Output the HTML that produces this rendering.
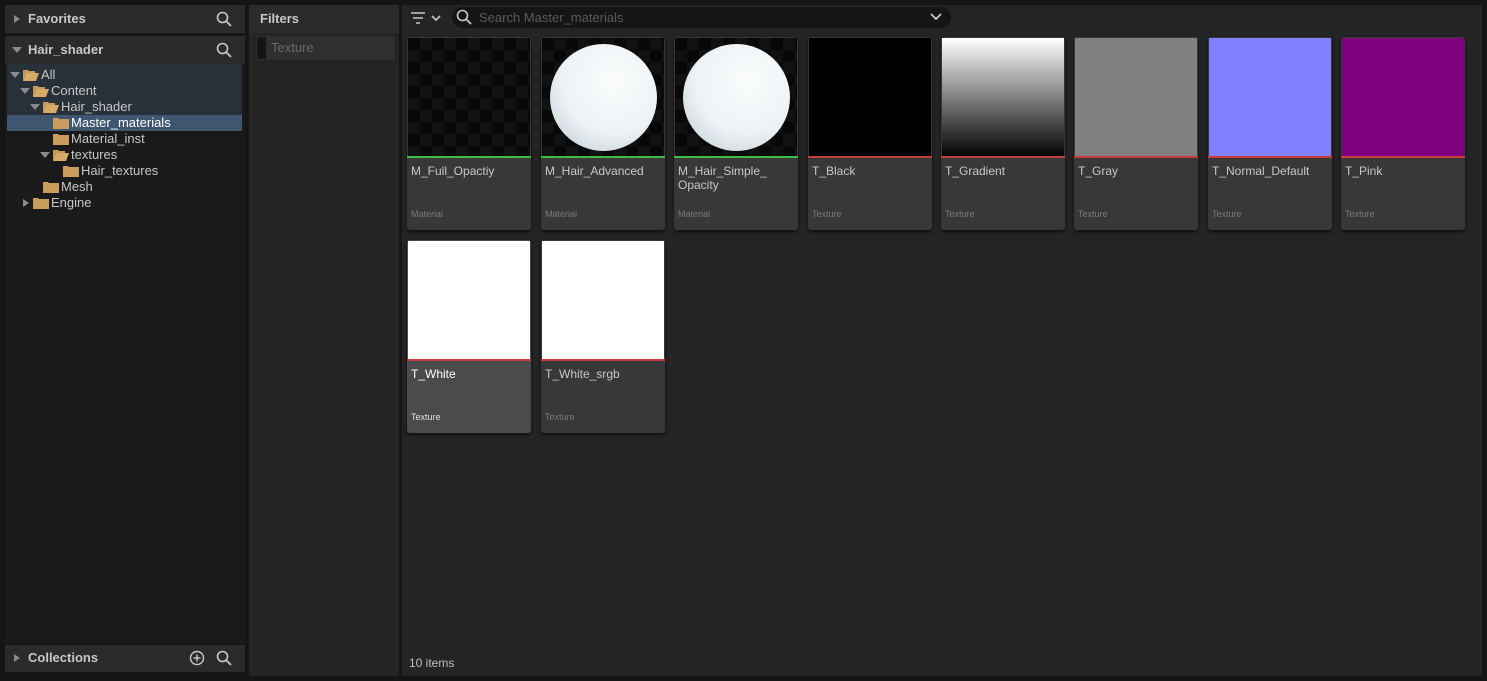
<!DOCTYPE html>
<html><head><meta charset="utf-8"><style>
*{margin:0;padding:0;box-sizing:border-box}
body{width:1487px;height:681px;background:#151515;font-family:"Liberation Sans",sans-serif;position:relative;overflow:hidden;color:#c0c0c0}
.a{position:absolute}
.hdr{background:#2b2b2b;color:#c8c8c8;font-weight:bold;font-size:13px}
.tri{position:absolute;width:0;height:0}
.tr{border-top:4px solid transparent;border-bottom:4px solid transparent;border-left:6px solid #8a8a8a}
.td{border-left:5px solid transparent;border-right:5px solid transparent;border-top:6px solid #8a8a8a}
.row{position:absolute;font-size:13px;color:#c8c8c8;height:16px;line-height:16px}
.card{position:absolute;width:124px;height:193px;background:#383838;border-radius:3px;box-shadow:0 2px 3px rgba(0,0,0,.6)}
.th{position:absolute;left:1px;top:1px;width:122px;height:119px;background:#000}
.ln{position:absolute;left:0;top:119px;width:124px;height:2px}
.nm{position:absolute;left:4px;top:127px;font-size:12px;color:#c8c8c8;line-height:14px}
.ty{position:absolute;left:4px;top:172px;font-size:9px;color:#7a7a7a}
.chk{background-color:#080808;background-image:linear-gradient(45deg,#111 25%,transparent 25%,transparent 75%,#111 75%),linear-gradient(45deg,#111 25%,transparent 25%,transparent 75%,#111 75%);background-size:24px 24px;background-position:0 0,12px 12px}
</style></head><body>
<svg width="0" height="0" style="position:absolute"><defs>
<symbol id="fo" viewBox="0 0 16 12"><path d="M0 1h5l1 1h6v2H3L0 12z" fill="#c49a5c"/><path d="M3 4h13l-3 8H0z" fill="#d6ab68"/></symbol>
<symbol id="fc" viewBox="0 0 16 12"><path d="M0 1h5l1 1h10v10H0z" fill="#c99d5d"/></symbol>
<symbol id="mg" viewBox="0 0 16 16"><circle cx="6.5" cy="6.5" r="5" fill="none" stroke="#c8c8c8" stroke-width="1.6"/><path d="M10 10l5 5" stroke="#c8c8c8" stroke-width="1.8"/></symbol>
</defs></svg>

<div class="a hdr" style="left:5px;top:5px;width:240px;height:28px"></div>
<div class="tri tr" style="left:14px;top:15px"></div>
<div class="a" style="left:28px;top:11px;font-size:13px;font-weight:bold;color:#c8c8c8">Favorites</div>
<svg class="a" style="left:216px;top:11px" width="16" height="16"><use href="#mg"/></svg>
<div class="a hdr" style="left:5px;top:36px;width:240px;height:28px"></div>
<div class="tri td" style="left:12px;top:47px"></div>
<div class="a" style="left:28px;top:42px;font-size:13px;font-weight:bold;color:#c8c8c8">Hair_shader</div>
<svg class="a" style="left:216px;top:42px" width="16" height="16"><use href="#mg"/></svg>
<div class="a" style="left:5px;top:64px;width:240px;height:580px;background:#1a1a1a"></div>
<div class="a" style="left:7px;top:64px;width:235px;height:67px;background:#28303a"></div>
<div class="a" style="left:7px;top:115px;width:235px;height:16px;background:#3e5670"></div>
<div class="tri td" style="left:10px;top:72px"></div><svg class="a" style="left:23px;top:69px" width="16" height="12"><use href="#fo"/></svg><div class="row" style="left:41px;top:67px">All</div>
<div class="tri td" style="left:20px;top:88px"></div><svg class="a" style="left:33px;top:85px" width="16" height="12"><use href="#fo"/></svg><div class="row" style="left:51px;top:83px">Content</div>
<div class="tri td" style="left:30px;top:104px"></div><svg class="a" style="left:43px;top:101px" width="16" height="12"><use href="#fo"/></svg><div class="row" style="left:61px;top:99px">Hair_shader</div>
<svg class="a" style="left:53px;top:117px" width="16" height="12"><use href="#fc"/></svg><div class="row" style="left:71px;top:115px;color:#fff">Master_materials</div>
<svg class="a" style="left:53px;top:133px" width="16" height="12"><use href="#fc"/></svg><div class="row" style="left:71px;top:131px">Material_inst</div>
<div class="tri td" style="left:40px;top:152px"></div><svg class="a" style="left:53px;top:149px" width="16" height="12"><use href="#fo"/></svg><div class="row" style="left:71px;top:147px">textures</div>
<svg class="a" style="left:63px;top:165px" width="16" height="12"><use href="#fc"/></svg><div class="row" style="left:81px;top:163px">Hair_textures</div>
<svg class="a" style="left:43px;top:181px" width="16" height="12"><use href="#fc"/></svg><div class="row" style="left:61px;top:179px">Mesh</div>
<div class="tri tr" style="left:23px;top:199px"></div><svg class="a" style="left:33px;top:197px" width="16" height="12"><use href="#fc"/></svg><div class="row" style="left:51px;top:195px">Engine</div>
<div class="a hdr" style="left:5px;top:645px;width:240px;height:27px"></div>
<div class="tri tr" style="left:14px;top:654px"></div>
<div class="a" style="left:28px;top:650px;font-size:13px;font-weight:bold;color:#c8c8c8">Collections</div>
<svg class="a" style="left:189px;top:650px" width="16" height="16"><circle cx="8" cy="8" r="6.5" fill="none" stroke="#c8c8c8" stroke-width="1.4"/><path d="M8 4.5v7M4.5 8h7" stroke="#c8c8c8" stroke-width="1.4"/></svg>
<svg class="a" style="left:216px;top:650px" width="16" height="16"><use href="#mg"/></svg>

<div class="a" style="left:249px;top:5px;width:150px;height:671px;background:#242424"></div>
<div class="a hdr" style="left:249px;top:5px;width:150px;height:28px"></div>
<div class="a" style="left:260px;top:11px;font-size:13px;font-weight:bold;color:#c8c8c8">Filters</div>
<div class="a" style="left:256px;top:36px;width:139px;height:24px;background:#2f2f2f;border-radius:3px"></div>
<div class="a" style="left:257px;top:37px;width:9px;height:22px;background:#151515;border-radius:3px 0 0 3px"></div>
<div class="a" style="left:271px;top:40px;font-size:13px;color:#6a6a6a">Texture</div>

<div class="a" style="left:402px;top:5px;width:1080px;height:671px;background:#242424"></div>
<svg class="a" style="left:410px;top:11px" width="32" height="14"><path d="M1 2h14M3 7h10M6 12h4" stroke="#c8c8c8" stroke-width="1.6"/><path d="M22 5l4 4 4-4" fill="none" stroke="#c8c8c8" stroke-width="1.6"/></svg>
<div class="a" style="left:452px;top:7px;width:499px;height:21px;background:#151515;border-radius:11px"></div>
<svg class="a" style="left:456px;top:9px" width="16" height="16"><use href="#mg"/></svg>
<div class="a" style="left:479px;top:10px;font-size:13px;color:#5a5a5a">Search Master_materials</div>
<svg class="a" style="left:930px;top:12px" width="12" height="10"><path d="M1 2l5 5 5-5" fill="none" stroke="#c8c8c8" stroke-width="1.8"/></svg>

<div class="card" style="left:407px;top:37px"><div class="th chk"></div><div class="ln" style="background:#3fbf3f"></div><div class="nm">M_Full_Opactiy</div><div class="ty">Material</div></div>
<div class="card" style="left:541px;top:37px"><div class="th chk"><div class="a" style="left:8px;top:6px;width:107px;height:107px;border-radius:50%;background:radial-gradient(circle at 60% 35%,#fafcfd 0,#eef2f4 55%,#b8c8d0 100%)"></div></div><div class="ln" style="background:#3fbf3f"></div><div class="nm">M_Hair_Advanced</div><div class="ty">Material</div></div>
<div class="card" style="left:674px;top:37px"><div class="th chk"><div class="a" style="left:8px;top:6px;width:107px;height:107px;border-radius:50%;background:radial-gradient(circle at 60% 35%,#fafcfd 0,#eef2f4 55%,#b8c8d0 100%)"></div></div><div class="ln" style="background:#3fbf3f"></div><div class="nm">M_Hair_Simple_<br>Opacity</div><div class="ty">Material</div></div>
<div class="card" style="left:808px;top:37px"><div class="th" style="background:#000"></div><div class="ln" style="background:#c83a3a"></div><div class="nm">T_Black</div><div class="ty">Texture</div></div>
<div class="card" style="left:941px;top:37px"><div class="th" style="background:linear-gradient(#fff,#000)"></div><div class="ln" style="background:#c83a3a"></div><div class="nm">T_Gradient</div><div class="ty">Texture</div></div>
<div class="card" style="left:1074px;top:37px"><div class="th" style="background:#808080"></div><div class="ln" style="background:#c83a3a"></div><div class="nm">T_Gray</div><div class="ty">Texture</div></div>
<div class="card" style="left:1208px;top:37px"><div class="th" style="background:#8080ff"></div><div class="ln" style="background:#c83a3a"></div><div class="nm">T_Normal_Default</div><div class="ty">Texture</div></div>
<div class="card" style="left:1341px;top:37px"><div class="th" style="background:#7f007f"></div><div class="ln" style="background:#c83a3a"></div><div class="nm">T_Pink</div><div class="ty">Texture</div></div>

<div class="card" style="left:407px;top:240px;background:#4b4b4b"><div class="th" style="background:#fff"></div><div class="ln" style="background:#c83a3a"></div><div class="nm" style="color:#fff">T_White</div><div class="ty" style="color:#e0e0e0">Texture</div></div>
<div class="card" style="left:541px;top:240px"><div class="th" style="background:#fff"></div><div class="ln" style="background:#c83a3a"></div><div class="nm">T_White_srgb</div><div class="ty">Texture</div></div>

<div class="a" style="left:409px;top:656px;font-size:12px;color:#c0c0c0">10 items</div>
</body></html>
